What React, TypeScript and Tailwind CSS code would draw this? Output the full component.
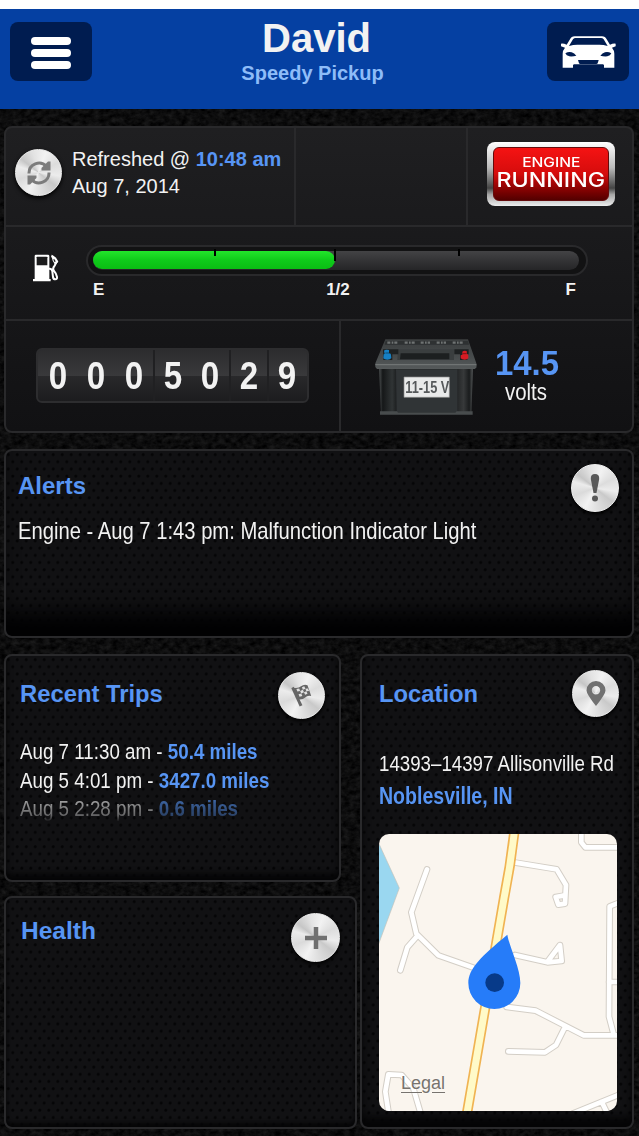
import React from 'react'

interface Trip {
  when: string;
  miles: string;
  faded?: boolean;
}

const trips: Trip[] = [
  { when: "Aug 7 11:30 am", miles: "50.4 miles" },
  { when: "Aug 5 4:01 pm", miles: "3427.0 miles" },
  { when: "Aug 5 2:28 pm", miles: "0.6 miles", faded: true },
];

const odometer = ["0", "0", "0", "5", "0", "2", "9"];

const Leather = () => (
  <svg className="absolute inset-0 w-full h-full" aria-hidden="true">
    <filter id="leather" x="0" y="0" width="100%" height="100%" colorInterpolationFilters="sRGB">
      <feTurbulence type="fractalNoise" baseFrequency="0.16 0.22" numOctaves="3" seed="4" />
      <feColorMatrix values="0.15 0 0 0 -0.026  0.15 0 0 0 -0.026  0.15 0 0 0 -0.024  0 0 0 0 1" />
    </filter>
    <rect width="100%" height="100%" filter="url(#leather)" />
  </svg>
)

const MetalButton = ({ className, children }: { className: string; children: React.ReactNode }) => (
  <button
    className={`flex shrink-0 items-center justify-center rounded-full border border-[#efefef] bg-[conic-gradient(from_20deg,#f2f2f2,#dcdcdc_12%,#ececec_22%,#c9c9c9_30%,#dedede_42%,#f2f2f2_52%,#dadada_64%,#ececec_74%,#c6c6c6_80%,#e2e2e2_90%,#f2f2f2)] shadow-[0_2px_4px_#000] ${className}`}
  >
    {children}
  </button>
)

const Panel = ({ className, children }: { className: string; children: React.ReactNode }) => (
  <section
    className={`rounded-lg border-2 border-[#29292b] bg-[#111113] bg-[radial-gradient(circle_at_25%_25%,#050506_0.8px,transparent_2.1px),radial-gradient(circle_at_75%_75%,#050506_0.8px,transparent_2.1px)] bg-[size:9px_14.4px] ${className}`}
  >
    {children}
  </section>
)

const CarIcon = () => (
  <svg viewBox="20 20 246 177" className="w-[82px] h-[59px]">
    <path
      d="M62 85q8-1 17 3l10-16q4-9 14-9h82q10 0 14 9l10 16q9-4 17-3v8l-11 4q7 8 7 18v42h-31v-8l-3-2H101l-3 2v8H67v-42q0-10 7-18l-12-4z"
      fill="#fff"
    />
    <path d="M86 92l12-20q3-4 8-4h76q5 0 8 4l12 20q-12-4-25-4h-66q-13 0-25 4z" fill="#001c50" />
    <path d="M75 114q10-6 19-3 8 3 14 10-10 3-21 2-9-2-12-9zM213 114q-10-6-19-3-8 3-14 10 10 3 21 2 9-2 12-9z" fill="#001c50" />
    <path d="M113 134h62l-3 10q-1 2-4 2h-48q-3 0-4-2z" fill="#001c50" />
  </svg>
)

const RefreshIcon = () => (
  <svg viewBox="0 0 26 26" className="w-[26px] h-[26px]" fill="none" stroke="#7c7c7c" strokeWidth="3">
    <path d="M3 13.500a10 10 0 0 1 17.500-7" />
    <path d="M23 12.500a10 10 0 0 1-17.500 7" />
    <path d="M24.500 1.500v9h-9v-2.500l6.500-6.500z" fill="#7c7c7c" stroke="none" />
    <path d="M1.500 24.500v-9h9v2.500l-6.500 6.500z" fill="#7c7c7c" stroke="none" />
  </svg>
)

const FuelIcon = () => (
  <svg viewBox="100 102 78 84" className="w-[26px] h-[28px]">
    <path d="M105 108q0-4 4-4h36q4 0 4 4v69h4v7h-53v-7h5z" fill="#fff" />
    <path d="M111 112q0-2 2-2h27q3 0 3 2v24h-32z" fill="#1b1b1c" />
    <path
      d="M148 146q9-1 10 8l2 17q1 7 7 7t5-7q-2-11-10-20-4-6 3-14l6-13-15-16"
      fill="none"
      stroke="#fff"
      strokeWidth="6"
    />
    <path d="M155 104q14 4 21 21l-9 10-8-13z" fill="#fff" />
    <path d="M163 116l5 8-3 3-4-8z" fill="#1b1b1c" />
  </svg>
)

const FlagIcon = () => (
  <svg viewBox="0 0 24 26" className="w-[23px] h-6">
    <path d="M1 4.500l2.500-1.500 9.500 20-3 1.500z" fill="#666" />
    <path d="M3.500 4q5 1 8-1.500 3-2.500 7-1.200L22.500 13q-4-1-6.500 1.500-3 3-7.500 2z" fill="#666" />
    <path
      d="M6.500 5.500l3-.7 1 2.700-3 .6zM12.500 3.500l2.500-1 1.200 2.700-2.700 1.100zM10.500 7.600l3-1.300 1.200 2.700-3 1.300zM16.200 5.200l2.800-.2 1.200 2.700-2.900.1zM8.800 11l2.900-.7 1.200 2.800-3 .7zM14.700 9l2.600-1.200 1.200 2.700-2.600 1.100z"
      fill="#e0e0e0"
    />
  </svg>
)

const Battery = () => (
  <svg viewBox="0 0 345 285" className="w-[115px] h-[95px]">
    <defs>
      <linearGradient id="batteryBody" x1="0" x2="1">
        <stop offset="0" stopColor="#4b4f50" />
        <stop offset="0.04" stopColor="#151718" />
        <stop offset="0.14" stopColor="#303435" />
        <stop offset="0.2" stopColor="#17191a" />
        <stop offset="0.8" stopColor="#1b1d1e" />
        <stop offset="0.9" stopColor="#37393a" />
        <stop offset="0.96" stopColor="#191b1c" />
        <stop offset="1" stopColor="#555859" />
      </linearGradient>
      <linearGradient id="batteryTop" x1="0" x2="0" y1="0" y2="1">
        <stop offset="0" stopColor="#3b3e3f" />
        <stop offset="0.6" stopColor="#484c4d" />
        <stop offset="1" stopColor="#565a5b" />
      </linearGradient>
    </defs>
    <path d="M27 110h282l-5 142H33z" fill="url(#batteryBody)" />
    <path d="M78 118h184v134H80z" fill="#303436" />
    <path d="M30 244h51l3 4h172l4-4h48v10H30z" fill="#484c4d" />
    <path d="M46 28h248l25 72q2 4 0 13l-5 4H21l-5-6v-11z" fill="url(#batteryTop)" />
    <path d="M16 102h303v4H16z" fill="#707474" />
    <path d="M47 33h247l3 11H44z" fill="#2e3132" />
    <path d="M52 38h30M104 38h30M152 38h28M200 38h28M248 38h30" stroke="#6f7373" strokeWidth="7" strokeDasharray="9 4 5 3" />
    <path d="M84 58h168v32H82z" fill="#3a3e3f" />
    <path d="M92 70h146v18H90z" fill="#1c1f20" />
    <path d="M39 58h46v15H67v17H40zM253 58h43v15h-4v17h-22V73h-17z" fill="#1e2122" />
    <path d="M42 62q3-4 15-2v10q5 0 6 4l1 10q-3 5-12 5t-12-4l1-12 3-1z" fill="#1680c4" />
    <path d="M277 65q3-4 13-2l1 9q4 1 4 5v8q-3 4-11 4t-12-4V76l5-2z" fill="#d51c24" />
    <path d="M46 69h12M278 71h12" stroke="#0006" strokeWidth="3" />
    <path d="M102 141h136v61H102z" fill="#e9eaea" stroke="#8b8d8d" strokeWidth="2" />
  </svg>
)

// Same road path drawn twice: grey casing first, white on top
const roads =
  "M171 133L124 262 139 326 205 391 310 428M140 335L112 367 91 436M438 113L560 133 588 180 585 236 565 239 557 216 580 212M435 390L532 412 575 408 570 360 534 408M410 546L497 557 641 631H745M585 606L558 660 525 682 415 679M745 234L719 244 717 575 731 628M717 471H745M634 20V52L646 67H745M56 865L46 800 55 748 95 750 130 790 152 865M610 865L745 810M695 830L712 865"

const LocationMap = () => (
  <svg viewBox="27 27 714 831" preserveAspectRatio="none" className="block w-full h-full">
    <path d="M27 27h714v831H27z" fill="#faf5ee" />
    <path d="M24 50L88 189 24 362z" fill="#9ad7f0" stroke="#c5c2ba" strokeWidth="2" />
    <g fill="none" strokeLinecap="round" strokeLinejoin="round">
      <path d={roads} stroke="#d3cec6" strokeWidth="20" />
      <path d={roads} stroke="#fff" strokeWidth="14" />
    </g>
    <g fill="none">
      <path d="M433 20Q422 120 402 220L291 865" stroke="#f0b352" strokeWidth="31" />
      <path d="M433 20Q422 120 402 220L291 865" stroke="#fffac8" strokeWidth="21" />
    </g>
    <path d="M412 329C418 365 451 430 451 474A78 78 0 0 1 295 474C295 430 335 393 412 329z" fill="#267cf9" />
    <circle cx="374" cy="473" r="28" fill="#073a89" />
  </svg>
)

const App = () => {
  return (
    <div className="relative w-[639px] h-[1136px] overflow-hidden bg-[#0c0c0d] font-['Liberation_Sans',Arial,sans-serif] text-[#f2f2f2]">
      <Leather />
      <div className="relative flex h-full flex-col">
        <header className="flex h-[109px] shrink-0 items-start justify-between border-t-[9px] border-white bg-[#0540a2] px-2.5 pt-[13px]">
          <button className="flex h-[59px] w-[82px] flex-col items-center justify-center gap-1 rounded-lg bg-[#001c50] pt-0.5">
            <span className="h-2 w-10 rounded-sm bg-white" />
            <span className="h-2 w-10 rounded-sm bg-white" />
            <span className="h-2 w-10 rounded-sm bg-white" />
          </button>
          <div className="-mt-[7px] pr-3.5 text-center font-bold">
            <h1 className="pl-2 text-[40px] leading-[46px]">David</h1>
            <p className="text-xl leading-6 text-[#8ebcf8]">Speedy Pickup</p>
          </div>
          <button className="h-[59px] w-[82px] rounded-lg bg-[#001c50]">
            <CarIcon />
          </button>
        </header>

        <main className="flex flex-col px-1 pt-[17px]">
          <section className="flex h-[307px] w-[630px] flex-col rounded-lg border-2 border-[#29292b] bg-linear-to-b from-[#1f1f21] to-[#111113]">
            <div className="flex h-[99px] border-b-2 border-[#29292b]">
              <div className="flex w-[290px] items-start border-r-2 border-[#29292b] pl-[9px] pt-[21px]">
                <MetalButton className="h-[47px] w-[47px]">
                  <RefreshIcon />
                </MetalButton>
                <div className="-mt-[3px] ml-2.5 whitespace-nowrap text-xl leading-[26.500px]">
                  <p>
                    Refreshed @ <b className="text-[#5795f4]">10:48 am</b>
                  </p>
                  <p>Aug 7, 2014</p>
                </div>
              </div>
              <div className="w-[172px] border-r-2 border-[#29292b]" />
              <div className="pl-[19px] pt-3.5">
                <div className="h-16 w-32 rounded-lg bg-[linear-gradient(#fff,#e5e5e5_15%,#bbb_40%,#444_72%,#a5a5a5_82%,#eee)] px-1.5 py-[5px]">
                  <div className="flex h-full flex-col items-center rounded-md border border-[#650b0b] bg-linear-to-b from-[#f51313] via-[#d50c0c] to-[#540000] pt-[7px] font-['Inter',sans-serif] text-white">
                    <span className="scale-x-[1.2] text-[13px] font-medium leading-[15px]">ENGINE</span>
                    <span className="scale-x-[1.16] text-xl font-medium leading-[20px]">RUNNING</span>
                  </div>
                </div>
              </div>
            </div>

            <div className="flex h-[94px] border-b-2 border-[#29292b]">
              <div className="w-20 pl-[27px] pt-[27px]">
                <FuelIcon />
              </div>
              <div className="pt-[18px]">
                <div className="h-[31px] w-[502px] rounded-full border-2 border-[#29292b] bg-[#121213] px-[5px] py-1">
                  <div className="relative h-[19px] w-[486px] rounded-full bg-linear-to-b from-[#434345] to-[#252527]">
                    <div className="h-[18px] w-[242px] rounded-full bg-linear-to-b from-[#22e52b] via-[#0fcb1a] to-[#0abd13]" />
                    <i className="absolute left-[121px] -top-0.5 h-[7px] w-0.5 bg-black" />
                    <i className="absolute left-[241px] -top-0.5 h-3 w-0.5 bg-black" />
                    <i className="absolute left-[365px] -top-0.5 h-[7px] w-0.5 bg-black" />
                  </div>
                </div>
                <div className="mt-1 flex justify-between pl-[7px] pr-3 text-[17px] font-bold leading-5">
                  <span>E</span>
                  <span className="pl-1.5">1/2</span>
                  <span>F</span>
                </div>
              </div>
            </div>

            <div className="flex flex-1">
              <div className="w-[335px] border-r-2 border-[#29292b] pl-[30px] pt-[27px]">
                <div className="flex h-[55px] w-[273px] items-center rounded-md border-2 border-[#2d2d2f] bg-[linear-gradient(#2c2c2e,#39393b_50%,#29292b_51%,#1c1c1e)] px-[1px]">
                  {odometer.map((digit, i) => (
                    <div
                      key={i}
                      className={`flex h-full w-[38px] items-center justify-center text-[39px] font-bold leading-none ${i > 2 && i !== 4 ? "border-l-2 border-[#202022]" : ""}`}
                    >
                      <span className="scale-x-[0.85]">{digit}</span>
                    </div>
                  ))}
                </div>
              </div>
              <div className="flex pl-[29px] pt-[9px]">
                <div className="relative h-[95px] w-[115px]">
                  <Battery />
                  <span className="absolute left-[34px] top-[48px] flex h-5 w-[46px] items-center justify-center whitespace-nowrap text-[17px] font-bold text-[#55585a]">
                    <span className="scale-x-[0.75]">11-15 V</span>
                  </span>
                </div>
                <div className="ml-2 w-[66px] text-center">
                  <p className="mt-[13px] scale-x-[0.94] text-[35px] font-bold leading-10 text-[#5795f4]">14.5</p>
                  <p className="-mt-[3px] scale-x-[0.85] text-2xl leading-6">volts</p>
                </div>
              </div>
            </div>
          </section>

          <Panel className="mt-4 h-[189px] w-[630px] shadow-[inset_0_-32px_20px_-8px_#020203]">
            <div className="flex justify-between pl-3 pr-[13px] pt-[13px]">
              <h2 className="mt-2 text-[24px] font-bold leading-7 text-[#5795f4]">Alerts</h2>
              <MetalButton className="h-12 w-12">
                <svg viewBox="0 0 10 28" className="h-7 w-2.5" fill="#595959">
                  <path d="M5 0Q9.500 0 9.200 5L6.500 19h-3L.8 5Q.5 0 5 0z" />
                  <circle cx="5" cy="24.500" r="3" />
                </svg>
              </MetalButton>
            </div>
            <p className="ml-3 mt-[3px] origin-left scale-x-[0.842] whitespace-nowrap text-2xl leading-8">
              Engine - Aug 7 1:43 pm: Malfunction Indicator Light
            </p>
          </Panel>

          <div className="mt-4 flex gap-[3px]">
            <div className="flex w-[353px] flex-col gap-[14px]">
              <Panel className="h-[228px] w-[337px] shadow-[inset_0_-6px_6px_#050506]">
                <div className="flex justify-between pl-[14px] pr-3.5 pt-4">
                  <h2 className="mt-2 text-[23.800px] font-bold leading-7 text-[#5795f4]">Recent Trips</h2>
                  <MetalButton className="h-[47px] w-[47px]">
                    <FlagIcon />
                  </MetalButton>
                </div>
                <div className="ml-[14px] mt-[19px] origin-left scale-x-[0.853] whitespace-nowrap text-[22px] leading-[28.700px]">
                  {trips.map((trip) => (
                    <p
                      key={trip.when}
                      className={trip.faded ? "mask-[linear-gradient(#ffffffa0_20%,#ffffff60_70%,transparent_92%)]" : ""}
                    >
                      {trip.when} - <b className="text-[#5795f4]">{trip.miles}</b>
                    </p>
                  ))}
                </div>
              </Panel>

              <Panel className="h-[233px] w-[353px] shadow-[inset_0_-4px_4px_#050506]">
                <div className="flex justify-between pl-[15px] pr-[15px] pt-[15px]">
                  <h2 className="mt-1 text-[24.500px] font-bold leading-7 text-[#5795f4]">Health</h2>
                  <MetalButton className="h-[49px] w-[49px]">
                    <svg viewBox="0 0 24 24" className="h-6 w-6" stroke="#707070" strokeWidth="4.500">
                      <path d="M12 1v22M1 12h22" />
                    </svg>
                  </MetalButton>
                </div>
              </Panel>
            </div>

            <Panel className="h-[475px] w-[274px] shadow-[inset_0_-10px_8px_#050506]">
              <div className="flex justify-between pl-[17px] pr-[13px] pt-3.5">
                <h2 className="mt-2.5 text-[23.800px] font-bold leading-7 text-[#5795f4]">Location</h2>
                <MetalButton className="h-[47px] w-[47px]">
                  <svg viewBox="0 0 20 25" className="h-[25px] w-5" fill="#717171">
                    <path d="M10 0a9.500 9.500 0 0 1 9.500 9.500Q19.500 13 10 25 .5 13 .5 9.500A9.500 9.500 0 0 1 10 0zm0 5a4.200 4.200 0 1 0 0 8.400A4.200 4.200 0 0 0 10 5z" />
                  </svg>
                </MetalButton>
              </div>
              <div className="ml-[17px] mt-[31px] origin-left scale-x-[0.85] whitespace-nowrap leading-8">
                <p className="text-[22px]">14393–14397 Allisonville Rd</p>
                <p className="text-[23px] font-bold text-[#5795f4]">Noblesville, IN</p>
              </div>
              <div className="relative ml-[17px] mt-[22px] h-[277px] w-[238px] overflow-hidden rounded-[10px]">
                <LocationMap />
                <a className="absolute bottom-[18px] left-[22px] text-[18px] leading-5 text-[#77736e] underline underline-offset-[3px] [text-shadow:0_0_2px_#fff]">
                  Legal
                </a>
              </div>
            </Panel>
          </div>
        </main>
      </div>
    </div>
  );
}

export default App
